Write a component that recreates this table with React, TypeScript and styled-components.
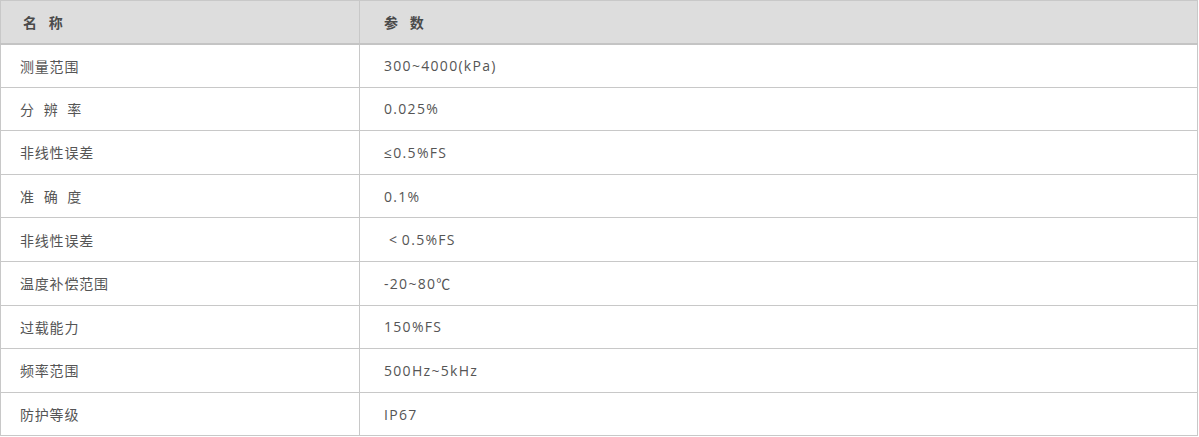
import React from 'react';
import styled, { createGlobalStyle } from 'styled-components';

const GlobalStyle = createGlobalStyle`
  body {
    margin: 0;
    background: #ffffff;
    font-family: "Open Sans", "Noto Sans CJK SC", sans-serif;
  }
`;

const Table = styled.table`
  width: 1198px;
  border-collapse: collapse;
  table-layout: fixed;
  color: #555555;
  font-size: 14px;
`;

const HeadRow = styled.tr`
  height: 43px;
  background: #dddddd;
  border-bottom: 2px solid #c4c4c4;
`;

const HeadCell = styled.th<{ $pad: number }>`
  text-align: left;
  font-weight: 700;
  color: #4a4a4a;
  letter-spacing: 4px;
  padding: 0 0 0 ${(p) => p.$pad}px;
  border: 1px solid #c8c8c8;
  border-bottom: 2px solid #c4c4c4;
`;

const Row = styled.tr`
  height: 43.6px;
`;

const Cell = styled.td<{ $pad: number; $spacing: number }>`
  padding: 0 0 0 ${(p) => p.$pad}px;
  border: 1px solid #c8c8c8;
  letter-spacing: ${(p) => p.$spacing}px;
  white-space: pre;
`;

const rows: [string, string][] = [
  ['测量范围', '300~4000(kPa)'],
  ['分  辨  率', '0.025%'],
  ['非线性误差', '≤0.5%FS'],
  ['准  确  度', '0.1%'],
  ['非线性误差', ' <\u20090.5%FS'],
  ['温度补偿范围', '-20~80℃'],
  ['过载能力', '150%FS'],
  ['频率范围', '500Hz~5kHz'],
  ['防护等级', 'IP67'],
];

export default function App() {
  return (
    <>
      <GlobalStyle />
      <Table>
        <colgroup>
          <col style={{ width: 359 }} />
          <col />
        </colgroup>
        <thead>
          <HeadRow>
            <HeadCell $pad={22}>名 称</HeadCell>
            <HeadCell $pad={24}>参 数</HeadCell>
          </HeadRow>
        </thead>
        <tbody>
          {rows.map(([name, value], i) => (
            <Row key={i}>
              <Cell $pad={19} $spacing={0.8}>{name}</Cell>
              <Cell $pad={24} $spacing={1.3}>{value}</Cell>
            </Row>
          ))}
        </tbody>
      </Table>
    </>
  );
}
